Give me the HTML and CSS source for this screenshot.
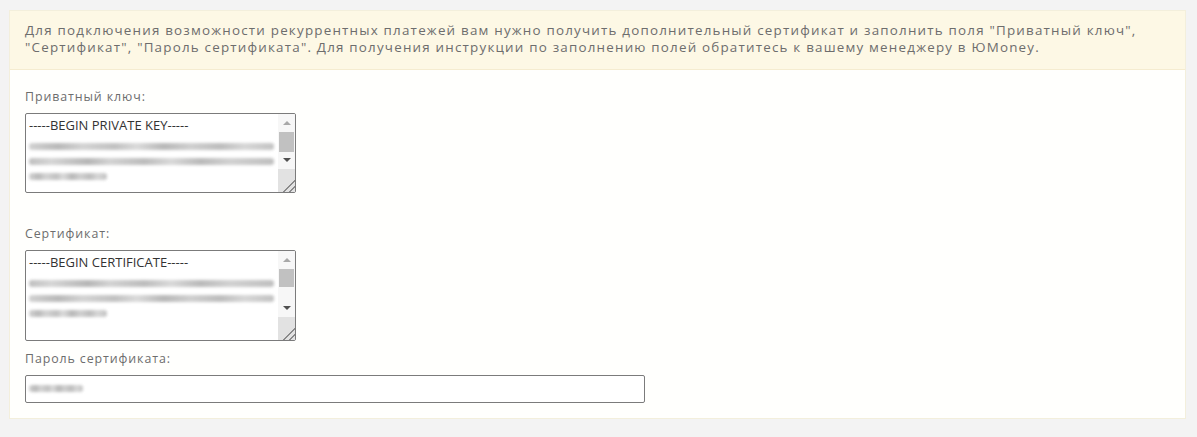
FILE: index.html
```html
<!DOCTYPE html>
<html>
<head>
    <meta charset="utf-8">
    <title>ЮMoney - рекуррентные платежи</title>
    <link rel="stylesheet" href="styles.css">
</head>
<body>
    <div class="panel">
        <div class="panel-note">
            Для подключения возможности рекуррентных платежей вам нужно получить дополнительный сертификат и заполнить поля "Приватный ключ", "Сертификат", "Пароль сертификата". Для получения инструкции по заполнению полей обратитесь к вашему менеджеру в ЮMoney.
        </div>

        <div class="panel-body">
            <div class="field">
                <label class="field-label">Приватный ключ:</label>
                <div class="fake-area area-key">
                    <div class="area-text">
                        <div class="area-line">-----BEGIN PRIVATE KEY-----</div>
                        <!-- key contents are hidden on the screenshot -->
                        <div class="smudge"></div>
                        <div class="smudge smudge-b"></div>
                        <div class="smudge smudge-short"></div>
                    </div>
                    <div class="scrollbar">
                        <span class="arrow up"></span>
                        <span class="thumb"></span>
                        <span class="arrow down"></span>
                        <span class="grip"></span>
                    </div>
                </div>
            </div>

            <div class="field field-cert">
                <label class="field-label">Сертификат:</label>
                <div class="fake-area area-cert">
                    <div class="area-text">
                        <div class="area-line">-----BEGIN CERTIFICATE-----</div>
                        <div class="smudge smudge-b"></div>
                        <div class="smudge"></div>
                        <div class="smudge smudge-short"></div>
                    </div>
                    <div class="scrollbar">
                        <span class="arrow up"></span>
                        <span class="thumb"></span>
                        <span class="arrow down"></span>
                        <span class="grip"></span>
                    </div>
                </div>
            </div>

            <div class="field field-pass">
                <label class="field-label">Пароль сертификата:</label>
                <div class="fake-input"><div class="smudge smudge-pass"></div></div>
            </div>
        </div>
    </div>
</body>
</html>
```

FILE: styles.css
```css
body {
    margin: 0;
    padding: 10px 11px 0 9px;
    background-color: #f3f3f3;
    font-family: "Open Sans", sans-serif;
    color: #6d6d6d;
}

.panel {
    background-color: #fffffd;
    border: 1px solid #f3efdc;
    height: 409px;
    box-sizing: border-box;
}

.panel-note {
    background-color: #fdf8e5;
    border-bottom: 1px solid #f5ecd0;
    padding: 11px 15px 12px 15px;
    font-size: 13.4px;
    letter-spacing: 1.2px;
    line-height: 17px;
    height: 59px;
    box-sizing: border-box;
}

.panel-body {
    padding: 19px 15px 0 15px;
}

.field-label {
    display: block;
    font-size: 12.4px;
    letter-spacing: 0.9px;
    line-height: 16px;
    height: 16px;
    margin-bottom: 8px;
}

.field-cert {
    margin-top: 33px;
}

.field-pass {
    margin-top: 10px;
}

.fake-area {
    display: flex;
    width: 271px;
    border: 1px solid #7b7b7b;
    border-radius: 2px;
    box-sizing: border-box;
    background: #fff;
    overflow: hidden;
}

.area-key {
    height: 80px;
}

.area-cert {
    height: 91px;
}

.area-text {
    flex: 1;
    padding: 1px 0 0 3px;
    overflow: hidden;
    font-size: 13px;
    line-height: 20px;
    color: #333;
}

.area-line {
    white-space: nowrap;
}

/* blurred key contents */
.smudge {
    height: 7px;
    margin: 8px 4px 6px 0;
    border-radius: 3px;
    background: linear-gradient(90deg, #c6c6c6, #a8a8a8 12%, #c9c9c9 22%, #b2b2b2 35%, #d2d2d2 44%, #a6a6a6 55%, #c4c4c4 66%, #adadad 78%, #cdcdcd 88%, #b4b4b4);
    filter: blur(1.8px);
    opacity: 0.8;
}

.smudge-b {
    background: linear-gradient(90deg, #b0b0b0, #cccccc 9%, #a4a4a4 24%, #c8c8c8 33%, #acacac 47%, #d0d0d0 58%, #a9a9a9 70%, #c6c6c6 82%, #b0b0b0);
}

.smudge-short {
    width: 78px;
}

.scrollbar {
    width: 17px;
    display: flex;
    flex-direction: column;
    align-items: center;
    background: #f7f7f7;
}

.arrow {
    width: 0;
    height: 0;
    border-left: 4px solid transparent;
    border-right: 4px solid transparent;
    margin: 7px 0 7px;
}

.arrow.up {
    border-bottom: 4px solid #a8a8a8;
}

.arrow.down {
    border-top: 4px solid #505050;
    margin: 6px 0 7px;
}

.thumb {
    width: 15px;
    flex: 0 0 20px;
    background: #c1c1c1;
}

.area-cert .thumb {
    flex-basis: 18px;
}

.area-cert .arrow.down {
    margin-top: 19px;
}

.grip {
    flex: 1;
    width: 17px;
    background: #e2e2e2 linear-gradient(135deg, transparent 70%, #8a8a8a 70%, #8a8a8a 74%, transparent 74%, transparent 84%, #8a8a8a 84%, #8a8a8a 88%, transparent 88%);
}

.fake-input {
    width: 620px;
    height: 28px;
    box-sizing: border-box;
    border: 1px solid #7b7b7b;
    border-radius: 2px;
    background: #fff;
    padding: 9px 0 0 3px;
}

.smudge-pass {
    width: 54px;
    margin: 0;
}
```
